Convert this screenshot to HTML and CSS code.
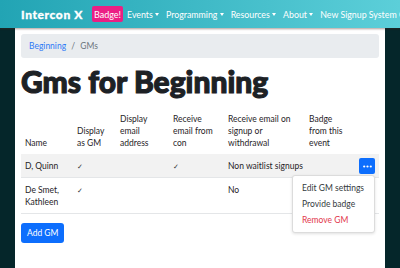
FILE: index.html
```html
<!DOCTYPE html>
<html lang="en">
<head>
  <meta charset="UTF-8" />
  <title>Gms for Beginning</title>
  <link rel="stylesheet" href="styles.css">
</head>
<body>
  <nav class="navbar">
    <span class="brand">Intercon X</span>
    <span class="badge-link">Badge!</span>
    <span class="nav-item">Events <span class="caret"></span></span>
    <span class="nav-item">Programming <span class="caret"></span></span>
    <span class="nav-item">Resources <span class="caret"></span></span>
    <span class="nav-item">About <span class="caret"></span></span>
    <span class="nav-item">New Signup System Guide</span>
  </nav>
  <div class="page">
    <main class="content">
      <div class="breadcrumb">
        <a href="#">Beginning</a>
        <span class="sep">/</span>
        <span class="current">GMs</span>
      </div>
      <h1>Gms for Beginning</h1>
      <table class="gm-table">
        <thead>
          <tr>
            <th class="col-name">Name</th>
            <th class="col-display">Display as GM</th>
            <th class="col-email">Display email address</th>
            <th class="col-con">Receive email from con</th>
            <th class="col-signup">Receive email on signup or withdrawal</th>
            <th class="col-badge">Badge from this event</th>
            <th class="col-actions"></th>
          </tr>
        </thead>
        <tbody>
          <tr class="striped">
            <td>D, Quinn</td>
            <td><span class="check">✓</span></td>
            <td></td>
            <td><span class="check">✓</span></td>
            <td class="no-wrap">Non waitlist signups</td>
            <td></td>
            <td class="actions">
              <button class="dots-btn">
                <svg width="9" height="3" viewBox="0 0 9 3"><circle cx="1.2" cy="1.5" r="1.1" fill="#fff"/><circle cx="4.5" cy="1.5" r="1.1" fill="#fff"/><circle cx="7.8" cy="1.5" r="1.1" fill="#fff"/></svg>
              </button>
              <div class="menu">
                <div class="menu-item">Edit GM settings</div>
                <div class="menu-item">Provide badge</div>
                <div class="menu-item danger">Remove GM</div>
              </div>
            </td>
          </tr>
          <tr>
            <td>De Smet, Kathleen</td>
            <td><span class="check">✓</span></td>
            <td></td>
            <td></td>
            <td>No</td>
            <td></td>
            <td></td>
          </tr>
        </tbody>
      </table>
      <button class="add-btn">Add GM</button>
    </main>
  </div>
</body>
</html>
```

FILE: styles.css
```css
html, body {
  margin: 0;
  padding: 0;
  height: 100%;
}
body {
  font-family: 'Lato', 'Liberation Sans', sans-serif;
  font-size: 8.5px;
  color: #1f2327;
  background-color: #05262a;
  overflow: hidden;
}
.navbar {
  display: flex;
  align-items: center;
  height: 28px;
  padding-left: 21px;
  white-space: nowrap;
  overflow: hidden;
  background: linear-gradient(to right, #22a4b4, #5ccfd9);
  box-shadow: 0 1px 2px rgba(80, 40, 30, 0.45);
  position: relative;
  z-index: 2;
}
.brand {
  color: #fff;
  font-weight: 900;
  font-size: 12px;
  letter-spacing: 0.6px;
  -webkit-text-stroke: 0.3px #fff;
  margin-right: 9px;
}
.badge-link {
  background-color: #ec1f84;
  color: #fff;
  font-size: 9px;
  line-height: 11px;
  padding: 3px 2px 2px;
  border-radius: 2px;
  margin-right: 4px;
}
.nav-item {
  color: #fff;
  font-size: 8.8px;
  margin-right: 7px;
}
.caret {
  display: inline-block;
  width: 0;
  height: 0;
  border-left: 2.5px solid transparent;
  border-right: 2.5px solid transparent;
  border-top: 3px solid #fff;
  vertical-align: 2px;
}
.page {
  padding: 0 15px;
  height: calc(100% - 28px);
}
.content {
  background-color: #fff;
  height: 100%;
  padding: 6px 6px 0;
  box-sizing: border-box;
}
.breadcrumb {
  background-color: #e9ecef;
  border-radius: 3px;
  padding: 6px 8px;
  height: 24px;
  box-sizing: border-box;
  font-size: 8.5px;
  line-height: 12px;
  color: #6c757d;
}
.breadcrumb a {
  color: #2d79f6;
  text-decoration: none;
}
.breadcrumb .sep {
  margin: 0 3px;
}
h1 {
  font-family: 'Lato', sans-serif;
  font-weight: 900;
  font-size: 30px;
  line-height: 36px;
  margin: 5px 0 10px;
  color: #1d2125;
  -webkit-text-stroke: 1.1px #1d2125;
}
.gm-table {
  width: 100%;
  table-layout: fixed;
  border-collapse: collapse;
  font-size: 8.5px;
  line-height: 12px;
}
.gm-table th {
  font-weight: normal;
  text-align: left;
  vertical-align: bottom;
  padding: 4px 4px 5px;
}
.gm-table td {
  vertical-align: top;
  padding: 6px 4px 5px;
  border-bottom: 1px solid #e4e6e8;
}
.gm-table td.no-wrap {
  white-space: nowrap;
}
.striped td {
  background-color: #f2f2f2;
}
.col-name { width: 44px; }
.col-display { width: 35px; }
.col-email { width: 45px; }
.col-con { width: 47px; }
.col-signup { width: 73px; }
.col-badge { width: 42px; }
.check {
  font-size: 7px;
  color: #333;
}
.actions {
  position: relative;
}
.dots-btn {
  width: 16px;
  height: 16px;
  border: none;
  border-radius: 2px;
  background-color: #0d6efd;
  padding: 0;
  margin: -2px 0 -3px auto;
  display: flex;
  align-items: center;
  justify-content: center;
}
.menu {
  position: absolute;
  right: 4px;
  top: 21px;
  background-color: #fff;
  border: 1px solid #dcdcdc;
  border-radius: 3px;
  box-shadow: 0 1px 3px rgba(0, 0, 0, 0.12);
  padding: 4px 0;
  white-space: nowrap;
  z-index: 3;
}
.menu-item {
  padding: 2px 10px 2px 9px;
  font-size: 8.5px;
  line-height: 12px;
  color: #343a40;
}
.menu-item.danger {
  color: #e2384c;
}
.add-btn {
  margin-top: 9px;
  background-color: #0d6efd;
  color: #fff;
  border: none;
  border-radius: 3px;
  font-family: 'Lato', sans-serif;
  font-size: 8.5px;
  padding: 4px 6px;
  height: 20px;
}
```
